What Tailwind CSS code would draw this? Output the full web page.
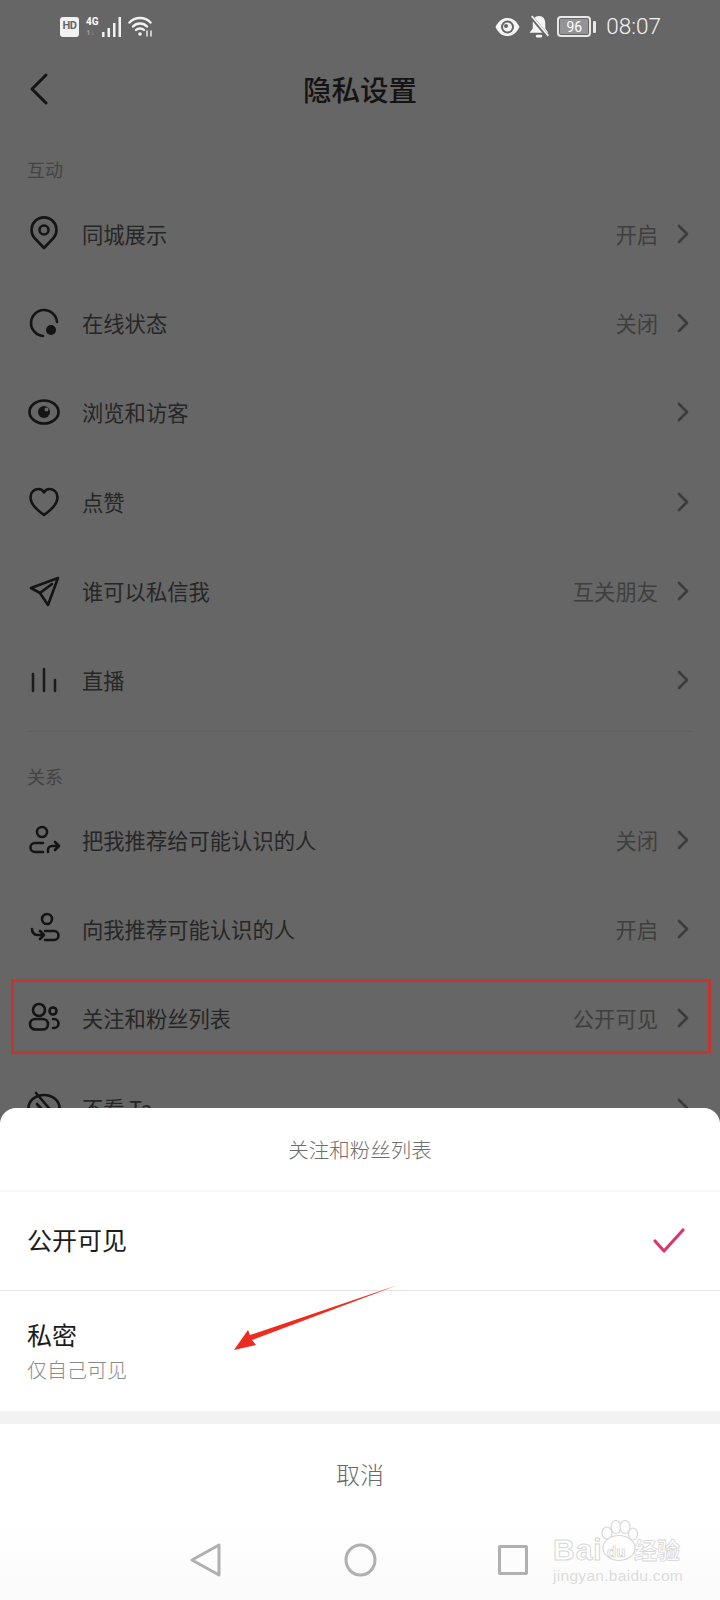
<!DOCTYPE html>
<html lang="zh-CN">

<head>
    <meta charset="UTF-8">
    <meta name="viewport" content="width=device-width, initial-scale=1.0">
    <title>隐私设置</title>
    <script src="https://cdn.jsdelivr.net/npm/@tailwindcss/browser@4"></script>
</head>

<body class="bg-[#666666] font-['Noto_Sans_CJK_SC',sans-serif] text-[#1f1f1f]">
    <div class="relative w-[720px] h-[1600px] overflow-hidden">

        <!-- Status bar -->
        <div class="h-[53px] flex items-center justify-between pl-[60px] pr-[59px] text-white">
            <div class="flex items-center">
                <div class="w-[19px] h-[20px] bg-[#f2f2f2] rounded-[3px] flex items-center justify-center font-['Roboto',sans-serif] text-[11px] font-bold text-[#666666] tracking-[-0.5px]">HD</div>
                <div class="ml-[7px] w-[14px] flex flex-col font-['Roboto',sans-serif] leading-none">
                    <span class="text-[10px] font-bold">4G</span>
                    <span class="text-[8px] font-bold text-[#9a9a9a] mt-[2px]">1↓</span>
                </div>
                <svg class="ml-[2px]" width="19" height="20" viewBox="0 0 19 20" fill="#f2f2f2">
                    <rect x="0" y="15" width="2.5" height="5"/>
                    <rect x="5.500" y="11" width="2.5" height="9"/>
                    <rect x="11" y="6" width="2.5" height="14"/>
                    <rect x="16.500" y="0" width="2.5" height="20"/>
                </svg>
                <svg class="ml-[7px]" width="25" height="21" viewBox="0 0 25 21" fill="none" stroke="#f2f2f2" stroke-width="2.4" stroke-linecap="round">
                    <path d="M1.5 6.5 C7 0.5 17 0.5 22.5 6.5"/>
                    <path d="M5 10.5 C8.5 6.5 15.5 6.5 19 10.5"/>
                    <path d="M8 14 C10 12 14 12 16 14"/>
                    <circle cx="12" cy="18" r="1.8" fill="#f2f2f2" stroke="none"/>
                    <path d="M19 15 v5 M23 15 v5" stroke-width="1.4"/>
                </svg>
            </div>
            <div class="flex items-center">
                <svg width="25" height="20" viewBox="0 0 25 20">
                    <path d="M0.5 10 C4 3 8 1 12.5 1 C17 1 21 3 24.5 10 C21 17 17 19 12.5 19 C8 19 4 17 0.5 10 Z" fill="#f5f5f5"/>
                    <circle cx="12.5" cy="10" r="6.5" fill="#666666"/>
                    <circle cx="12.5" cy="10" r="4.5" fill="#f5f5f5"/>
                    <circle cx="11" cy="9" r="2" fill="#666666"/>
                </svg>
                <svg class="ml-[8px]" width="22" height="23" viewBox="0 0 20 22" fill="#f5f5f5">
                    <path d="M10 1 C6 1 4 4 4 8 V13 L1 17 H19 L16 13 V8 C16 4 14 1 10 1 Z"/>
                    <rect x="7" y="19" width="6" height="2.5" rx="1.2"/>
                    <path d="M2 1 L18 20" stroke="#666666" stroke-width="3.5"/>
                    <path d="M3 1 L19 20" stroke="#f5f5f5" stroke-width="1.6"/>
                </svg>
                <div class="ml-[7px] w-[34px] h-[21px] border-[2px] border-[#e8e8e8] rounded-[4px] p-[1px]">
                    <div class="w-full h-full bg-[#949494] rounded-[1px] flex items-center justify-center font-['Roboto',sans-serif] text-[14px] leading-none text-white">96</div>
                </div>
                <div class="ml-[2px] w-[3px] h-[12px] bg-[#e8e8e8] rounded-[1px]"></div>
                <span class="ml-[10px] font-['Roboto',sans-serif] font-light text-[22.500px] leading-none text-[#f5f5f5]">08:07</span>
            </div>
        </div>

        <!-- Title bar -->
        <div class="relative h-[75px] flex items-center justify-center">
            <svg class="absolute left-[28px] top-[19px]" width="24" height="34" viewBox="0 0 24 34" fill="none" stroke="#141414" stroke-width="3" stroke-linecap="round" stroke-linejoin="round">
                <path d="M18 3 L4 17 L18 31"/>
            </svg>
            <h1 class="-mt-[3px] text-[28.500px] leading-none font-medium text-[#141414]">隐私设置</h1>
        </div>

        <!-- 互动 -->
        <div class="h-[61px] pl-[27px] pt-[28px] text-[18px] leading-[26px] text-[#434343]">互动</div>

        <div class="flex items-center h-[89.33px] pl-[28px] pr-[30px]">
            <svg class="w-[32px] h-[32px] overflow-visible shrink-0" viewBox="0 0 32 32" fill="none" stroke="#141414" stroke-width="2.6" stroke-linejoin="round">
                <path d="M16 30 L6.5 20 A12.5 12.5 0 1 1 25.5 20 Z"/>
                <circle cx="16" cy="12" r="4.5"/>
            </svg>
            <span class="ml-[22px] text-[21.300px] text-[#262626]">同城展示</span>
            <span class="ml-auto text-[21.300px] text-[#3f3f3f]">开启</span>
            <svg class="ml-[18px] shrink-0" width="14" height="20" viewBox="0 0 14 20" fill="none" stroke="#3c3c3c" stroke-width="2.6" stroke-linecap="round" stroke-linejoin="round"><path d="M3 2 L11 10 L3 18"/></svg>
        </div>
        <div class="flex items-center h-[89.33px] pl-[28px] pr-[30px]">
            <svg class="w-[32px] h-[32px] overflow-visible shrink-0" viewBox="0 0 32 32" fill="none" stroke="#141414" stroke-width="2.6" stroke-linecap="round">
                <path d="M15 29 A13 13 0 1 1 29 15"/>
                <circle cx="23" cy="23" r="5" fill="#141414" stroke="none"/>
            </svg>
            <span class="ml-[22px] text-[21.300px] text-[#262626]">在线状态</span>
            <span class="ml-auto text-[21.300px] text-[#3f3f3f]">关闭</span>
            <svg class="ml-[18px] shrink-0" width="14" height="20" viewBox="0 0 14 20" fill="none" stroke="#3c3c3c" stroke-width="2.6" stroke-linecap="round" stroke-linejoin="round"><path d="M3 2 L11 10 L3 18"/></svg>
        </div>
        <div class="flex items-center h-[89.33px] pl-[28px] pr-[30px]">
            <svg class="w-[32px] h-[32px] overflow-visible shrink-0" viewBox="0 0 32 32" fill="none" stroke="#141414" stroke-width="2.6">
                <ellipse cx="16" cy="16" rx="14.5" ry="11.5"/>
                <circle cx="16" cy="16" r="6" fill="#141414" stroke="none"/>
                <circle cx="18.500" cy="13.500" r="2" fill="#666666" stroke="none"/>
            </svg>
            <span class="ml-[22px] text-[21.300px] text-[#262626]">浏览和访客</span>
            <svg class="ml-auto shrink-0" width="14" height="20" viewBox="0 0 14 20" fill="none" stroke="#3c3c3c" stroke-width="2.6" stroke-linecap="round" stroke-linejoin="round"><path d="M3 2 L11 10 L3 18"/></svg>
        </div>
        <div class="flex items-center h-[89.33px] pl-[28px] pr-[30px]">
            <svg class="w-[32px] h-[32px] overflow-visible shrink-0" viewBox="0 0 32 32" fill="none" stroke="#141414" stroke-width="2.6" stroke-linejoin="round">
                <path d="M16 29 C10 24.5 2.5 19 2.5 11 C2.5 6 6.5 3 10.5 3 C13 3 15 4.5 16 6.5 C17 4.5 19 3 21.5 3 C25.500 3 29.500 6 29.500 11 C29.500 19 22 24.500 16 29 Z"/>
            </svg>
            <span class="ml-[22px] text-[21.300px] text-[#262626]">点赞</span>
            <svg class="ml-auto shrink-0" width="14" height="20" viewBox="0 0 14 20" fill="none" stroke="#3c3c3c" stroke-width="2.6" stroke-linecap="round" stroke-linejoin="round"><path d="M3 2 L11 10 L3 18"/></svg>
        </div>
        <div class="flex items-center h-[89.33px] pl-[28px] pr-[30px]">
            <svg class="w-[32px] h-[32px] overflow-visible shrink-0" viewBox="0 0 32 32" fill="none" stroke="#141414" stroke-width="2.6" stroke-linejoin="round" stroke-linecap="round">
                <path d="M30 3 L3 13 L12 18 L20 30 Z"/>
                <path d="M24 9 L12 18"/>
            </svg>
            <span class="ml-[22px] text-[21.300px] text-[#262626]">谁可以私信我</span>
            <span class="ml-auto text-[21.300px] text-[#3f3f3f]">互关朋友</span>
            <svg class="ml-[18px] shrink-0" width="14" height="20" viewBox="0 0 14 20" fill="none" stroke="#3c3c3c" stroke-width="2.6" stroke-linecap="round" stroke-linejoin="round"><path d="M3 2 L11 10 L3 18"/></svg>
        </div>
        <div class="flex items-center h-[89.33px] pl-[28px] pr-[30px]">
            <svg class="w-[32px] h-[32px] overflow-visible shrink-0" viewBox="0 0 32 32" fill="none" stroke="#1c1c1c" stroke-width="2.6" stroke-linecap="round">
                <path d="M5 10 V27 M16 5 V27 M27 16 V27"/>
            </svg>
            <span class="ml-[22px] text-[21.300px] text-[#262626]">直播</span>
            <svg class="ml-auto shrink-0" width="14" height="20" viewBox="0 0 14 20" fill="none" stroke="#3c3c3c" stroke-width="2.6" stroke-linecap="round" stroke-linejoin="round"><path d="M3 2 L11 10 L3 18"/></svg>
        </div>

        <!-- 关系 -->
        <div class="mx-[28px] mt-[6px] border-t border-[#5f5f5f]"></div>
        <div class="h-[63px] pl-[27px] pt-[31px] text-[18px] leading-[26px] text-[#434343]">关系</div>

        <div class="flex items-center h-[89.33px] pl-[28px] pr-[30px]">
            <svg class="w-[32px] h-[32px] overflow-visible shrink-0" viewBox="0 0 32 32" fill="none" stroke="#141414" stroke-width="2.6" stroke-linecap="round" stroke-linejoin="round">
                <circle cx="14" cy="8" r="5"/>
                <path d="M15 19 H7 A4.500 4.500 0 0 0 7 28 H15"/>
                <path d="M20 28 V26 A4 4 0 0 1 24 22 H30 M27 18 L31 22 L27 26"/>
            </svg>
            <span class="ml-[22px] text-[21.300px] text-[#262626]">把我推荐给可能认识的人</span>
            <span class="ml-auto text-[21.300px] text-[#3f3f3f]">关闭</span>
            <svg class="ml-[18px] shrink-0" width="14" height="20" viewBox="0 0 14 20" fill="none" stroke="#3c3c3c" stroke-width="2.6" stroke-linecap="round" stroke-linejoin="round"><path d="M3 2 L11 10 L3 18"/></svg>
        </div>
        <div class="flex items-center h-[89.33px] pl-[28px] pr-[30px]">
            <svg class="w-[32px] h-[32px] overflow-visible shrink-0" viewBox="0 0 32 32" fill="none" stroke="#141414" stroke-width="2.6" stroke-linecap="round" stroke-linejoin="round">
                <circle cx="19" cy="6" r="5"/>
                <path d="M17 18 H26 A4.500 4.500 0 0 1 26 27 H17"/>
                <path d="M4 16 C4 19 6 22 9 22 H15 M12 18 L16 22 L12 26"/>
            </svg>
            <span class="ml-[22px] text-[21.300px] text-[#262626]">向我推荐可能认识的人</span>
            <span class="ml-auto text-[21.300px] text-[#3f3f3f]">开启</span>
            <svg class="ml-[18px] shrink-0" width="14" height="20" viewBox="0 0 14 20" fill="none" stroke="#3c3c3c" stroke-width="2.6" stroke-linecap="round" stroke-linejoin="round"><path d="M3 2 L11 10 L3 18"/></svg>
        </div>
        <div class="flex items-center h-[89.33px] pl-[28px] pr-[30px]">
            <svg class="w-[32px] h-[32px] overflow-visible shrink-0" viewBox="0 0 32 32" fill="none" stroke="#141414" stroke-width="2.6" stroke-linecap="round" stroke-linejoin="round">
                <circle cx="11" cy="8" r="6"/>
                <rect x="2" y="17" width="18" height="10.500" rx="5.200"/>
                <circle cx="25" cy="9" r="3.500"/>
                <path d="M25 17 H26 A4.500 4.500 0 0 1 26 26 H25"/>
            </svg>
            <span class="ml-[22px] text-[21.300px] text-[#262626]">关注和粉丝列表</span>
            <span class="ml-auto text-[21.300px] text-[#3f3f3f]">公开可见</span>
            <svg class="ml-[18px] shrink-0" width="14" height="20" viewBox="0 0 14 20" fill="none" stroke="#3c3c3c" stroke-width="2.6" stroke-linecap="round" stroke-linejoin="round"><path d="M3 2 L11 10 L3 18"/></svg>
        </div>
        <div class="flex items-center h-[89.33px] pl-[28px] pr-[30px]">
            <svg class="w-[32px] h-[32px] overflow-visible shrink-0" viewBox="0 0 32 32" fill="none" stroke="#141414" stroke-width="2.6" stroke-linecap="round">
                <ellipse cx="16" cy="16" rx="15.500" ry="13"/>
                <path d="M8 1 L26 22"/>
                <path d="M9 12 L20 24"/>
            </svg>
            <span class="ml-[22px] text-[21.300px] text-[#262626]">不看 Ta</span>
            <svg class="ml-auto shrink-0" width="14" height="20" viewBox="0 0 14 20" fill="none" stroke="#3c3c3c" stroke-width="2.6" stroke-linecap="round" stroke-linejoin="round"><path d="M3 2 L11 10 L3 18"/></svg>
        </div>

        <!-- Red highlight drawn on the screenshot -->
        <div class="absolute left-[11px] top-[979px] w-[700px] h-[75px] border-[3px] border-[#c5352f]"></div>

        <!-- Bottom sheet -->
        <div class="absolute left-0 right-0 bottom-0 h-[492px] bg-white rounded-t-[16px] flex flex-col">
            <div class="h-[84px] flex items-center justify-center border-b-2 border-[#f6f6f6] text-[20.500px] text-[#6e6e6e] font-light">关注和粉丝列表</div>
            <div class="h-[99px] flex items-center justify-between pl-[27px] pr-[35px] border-b border-[#e4e4e4]">
                <span class="-mt-[3px] text-[25px] text-[#1c1c1c]">公开可见</span>
                <svg width="32" height="26" viewBox="0 0 32 26" fill="none" stroke="#d63a6c" stroke-width="3.200" stroke-linecap="round" stroke-linejoin="round">
                    <path d="M2 13 L11 23 L30 2"/>
                </svg>
            </div>
            <div class="h-[120px] pl-[27px] pt-[25px] flex flex-col">
                <span class="text-[25px] leading-[36px] text-[#1c1c1c]">私密</span>
                <span class="text-[20px] leading-[30px] mt-[3px] font-light text-[#8a8a8a]">仅自己可见</span>
            </div>
            <div class="h-[13px] bg-[#f2f2f2]"></div>
            <div class="flex-1 flex flex-col bg-white">
                <div class="h-[100px] flex items-center justify-center text-[24px] font-light text-[#6a6a6a]">取消</div>
                <div class="flex-1 bg-gradient-to-b from-white to-[#fafafa] relative">
                    <svg class="absolute left-[190px] top-[19px]" width="32" height="34" viewBox="0 0 32 34" fill="none" stroke="#b0b0b0" stroke-width="3" stroke-linejoin="round"><path d="M29 2 V32 L2 17 Z"/></svg>
                    <svg class="absolute left-[343px] top-[19px]" width="35" height="34" viewBox="0 0 35 34" fill="none" stroke="#b0b0b0" stroke-width="3"><ellipse cx="17.500" cy="17" rx="14.500" ry="15"/></svg>
                    <div class="absolute left-[498px] top-[21px] w-[30px] h-[30px] border-[3px] border-[#b0b0b0] rounded-[2px]"></div>
                </div>
            </div>
        </div>

        <!-- Red arrow drawn on the screenshot -->
        <svg class="absolute left-[230px] top-[1280px]" width="170" height="76" viewBox="0 0 170 76" fill="#ee2b1f">
            <path d="M168 5 L22 60 L26 65 L4 70 L18 50 L20 55 Z"/>
        </svg>

        <!-- Baidu jingyan watermark -->
        <div class="absolute left-[553px] top-[1520px] w-[130px] h-[68px] text-white">
            <svg class="absolute left-[44px] top-0" width="44" height="44" viewBox="0 0 44 44" fill="#ffffff" stroke="#d8d8d8" stroke-width="1.200">
                <ellipse cx="10" cy="13" rx="5" ry="6"/>
                <ellipse cx="19" cy="7" rx="5" ry="6.500"/>
                <ellipse cx="28" cy="7" rx="5" ry="6.500"/>
                <ellipse cx="36" cy="14" rx="4.500" ry="6"/>
                <ellipse cx="22" cy="28" rx="16" ry="12.500"/>
            </svg>
            <span class="absolute left-0 top-[15px] font-['Liberation_Sans',sans-serif] font-bold text-[30px] leading-none tracking-[1px] [-webkit-text-stroke:1px_#d8d8d8]">Bai</span>
            <span class="absolute left-[54px] top-[24px] font-['Liberation_Sans',sans-serif] font-bold text-[15px] leading-none [-webkit-text-stroke:0.6px_#cccccc]">du</span>
            <span class="absolute left-[81px] top-[18px] font-bold text-[23px] leading-none [-webkit-text-stroke:0.8px_#d8d8d8]">经验</span>
            <span class="absolute left-0 top-[48px] font-['Liberation_Sans',sans-serif] text-[15.500px] leading-none tracking-[0.3px] text-[#dcdcdc]">jingyan.baidu.com</span>
        </div>
    </div>
</body>

</html>
